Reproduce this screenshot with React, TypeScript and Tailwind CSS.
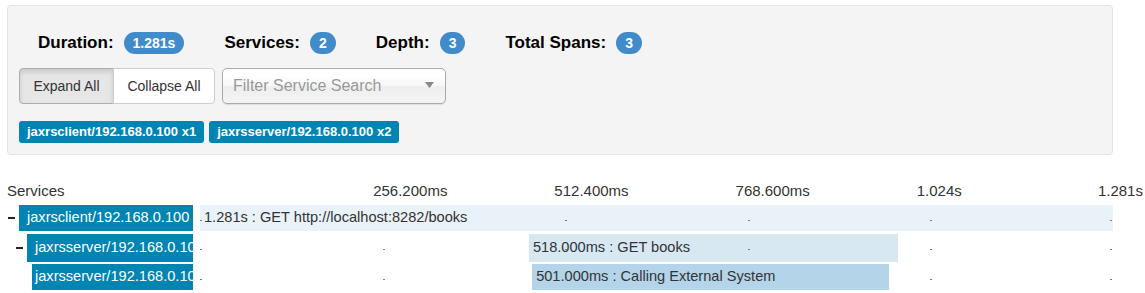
import React from 'react';

const summary = [
  { label: 'Duration:', value: '1.281s' },
  { label: 'Services:', value: '2' },
  { label: 'Depth:', value: '3' },
  { label: 'Total Spans:', value: '3' },
];

const markers = ['256.200ms', '512.400ms', '768.600ms', '1.024s'];

const TIMELINE = 913;
const TOTAL = 1281;

type Span = {
  service: string;
  indent: number;
  toggle: boolean;
  textPad: number;
  start: number;
  duration: number;
  text: string;
  color: string;
  h: string;
  mt: string;
};

const spans: Span[] = [
  {
    service: 'jaxrsclient/192.168.0.100',
    indent: 1,
    toggle: true,
    textPad: 8,
    start: 0,
    duration: 1281,
    text: '1.281s : GET http://localhost:8282/books',
    color: 'bg-[#eaf2f9]',
    h: 'h-[26px]',
    mt: 'mt-[5px]',
  },
  {
    service: 'jaxrsserver/192.168.0.100',
    indent: 9,
    toggle: true,
    textPad: 8,
    start: 461.5,
    duration: 518,
    text: '518.000ms : GET books',
    color: 'bg-[#d8e8f3]',
    h: 'h-[28px]',
    mt: 'mt-[3px]',
  },
  {
    service: 'jaxrsserver/192.168.0.100',
    indent: 25,
    toggle: false,
    textPad: 3,
    start: 466,
    duration: 501,
    text: '501.000ms : Calling External System',
    color: 'bg-[#b4d4e9]',
    h: 'h-[26px]',
    mt: 'mt-[2px]',
  },
];

const ticks = [0, 1, 2, 3, 4, 5];

function TraceRow({ span, row }: { span: Span; row: number }) {
  const left = (span.start / TOTAL) * TIMELINE;
  const width = (span.duration / TOTAL) * TIMELINE;
  return (
    <div className={`flex ${span.h} ${span.mt}`}>
      <div className="flex w-[186px] items-center" style={{ paddingLeft: span.indent }}>
        {span.toggle && <span className="mr-[4px] h-[2px] w-[7px] shrink-0 bg-[#222]" />}
        <div
          className="flex h-full min-w-0 flex-1 items-center overflow-hidden whitespace-nowrap bg-[#0085b2] text-[14.6px] text-white"
          style={{ paddingLeft: span.textPad }}
        >
          {span.service}
        </div>
      </div>
      <div className="relative ml-[7px] h-full w-[913px]">
        <div
          className={`absolute top-0 flex h-full items-center whitespace-nowrap pl-[4px] text-[14.6px] text-[#333] ${span.color}`}
          style={{ left, width }}
        >
          {span.text}
        </div>
        {ticks.map((t) => (
          <span
            key={t}
            className={`absolute top-[15px] h-[1px] w-[2px] ${
              row > 0 && t === 1 ? 'bg-[#d06060]' : 'bg-[#7a7a7a]'
            }`}
            style={{ left: Math.min(t * (TIMELINE / 5), 910) }}
          />
        ))}
      </div>
    </div>
  );
}

export default function App() {
  return (
    <div className="h-[293px] w-[1145px] overflow-hidden bg-white font-['Liberation_Sans',Arial,sans-serif]">
      <div className="mx-[7px] mt-[5px] h-[150px] w-[1106px] rounded-[4px] border border-[#e3e3e3] bg-[#f4f4f4] px-[11px] pt-[26px]">
        <div className="flex h-[22px] items-center pl-[19px]">
          {summary.map((s) => (
            <div key={s.label} className="mr-[40px] flex items-center">
              <span className="text-[17px] font-bold text-black">{s.label}</span>
              <span className="ml-[10px] flex h-[22px] items-center rounded-full bg-[#428bca] px-[9px] text-[14px] font-bold text-white">
                {s.value}
              </span>
            </div>
          ))}
        </div>

        <div className="mt-[14px] flex items-center">
          <div className="flex">
            <button className="h-[36px] w-[95px] rounded-l-[4px] border border-[#adadad] bg-[#e6e6e6] text-[14px] text-[#333] shadow-[inset_0_3px_5px_rgba(0,0,0,0.125)]">
              Expand All
            </button>
            <button className="-ml-px h-[36px] w-[102px] rounded-r-[4px] border border-[#ccc] bg-white text-[14px] text-[#333]">
              Collapse All
            </button>
          </div>
          <div className="ml-[7px] flex h-[36px] w-[224px] items-center justify-between rounded-[5px] border border-[#aaa] bg-[linear-gradient(#fff_20%,#f6f6f6_50%,#eee_52%,#f4f4f4_100%)] pl-[10px] pr-[11px] shadow-[0_1px_1px_rgba(0,0,0,0.1)]">
            <span className="text-[16px] text-[#999]">Filter Service Search</span>
            <svg width="9" height="6" viewBox="0 0 9 6" className="mb-[2px]">
              <path d="M0 0 L9 0 L4.5 6 Z" fill="#888" />
            </svg>
          </div>
        </div>

        <div className="mt-[17px] flex gap-[5px]">
          <span className="flex h-[22px] items-center rounded-[3px] bg-[#0085b2] px-[8px] text-[13px] font-bold text-white">
            jaxrsclient/192.168.0.100 x1
          </span>
          <span className="flex h-[22px] items-center rounded-[3px] bg-[#0085b2] px-[8px] text-[13px] font-bold text-white">
            jaxrsserver/192.168.0.100 x2
          </span>
        </div>
      </div>

      <div className="mt-[28px] flex h-[17px] items-center pl-[7px] pr-[2px] text-[15px] text-[#333]">
        <div className="w-[369px]">Services</div>
        {markers.map((m) => (
          <div key={m} className="w-[182.6px]">
            {m}
          </div>
        ))}
        <div className="flex-1 whitespace-nowrap text-right">1.281s</div>
      </div>

      <div className="pl-[7px]">
        {spans.map((s, i) => (
          <TraceRow key={i} span={s} row={i} />
        ))}
      </div>
    </div>
  );
}
